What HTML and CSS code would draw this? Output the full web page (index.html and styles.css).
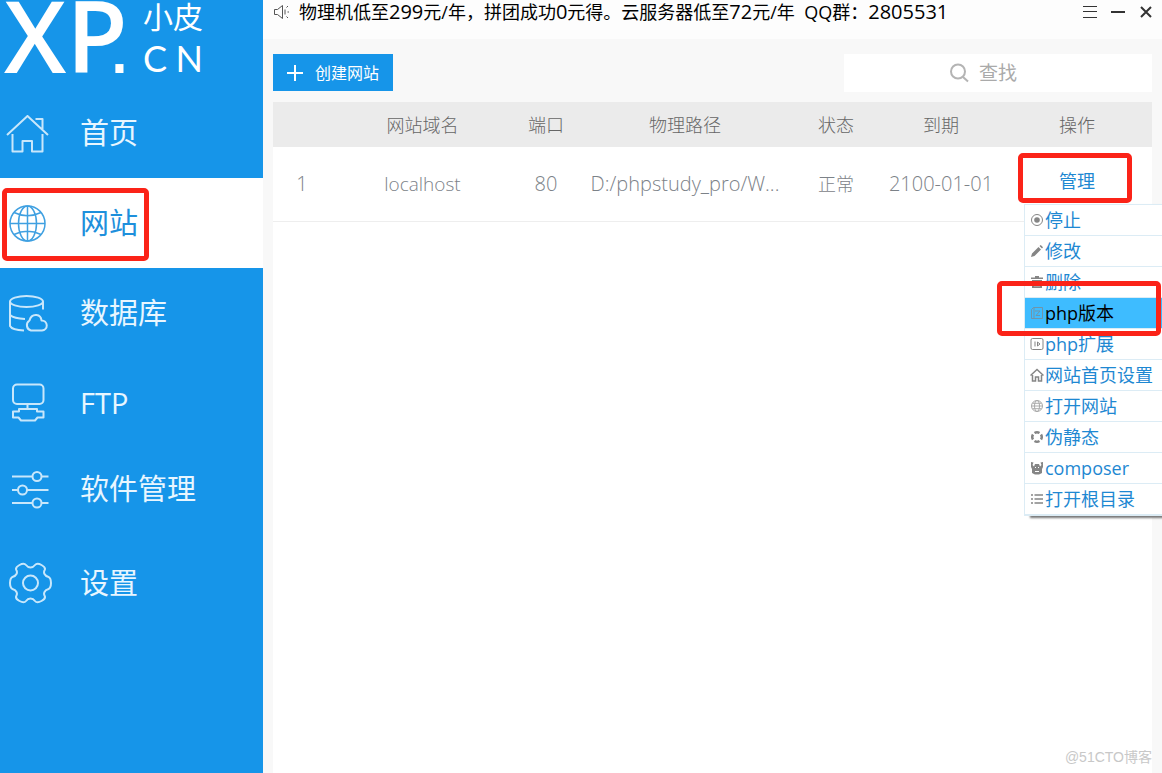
FILE: index.html
```html
<!DOCTYPE html>
<html lang="zh-CN">
<head>
<meta charset="utf-8">
<title>小皮 XP.CN</title>
<link rel="stylesheet" href="styles.css">
</head>
<body>
<div class="app">
  <aside class="sidebar">
    <div class="logo">
      <span class="logo-mark">XP<span class="logo-dot">.</span></span>
      <span class="logo-side">
        <span class="logo-cn">小皮</span>
        <span class="logo-domain"><span>C</span><span>N</span></span>
      </span>
    </div>
    <nav class="nav">
      <a class="nav-item" href="#">
        <svg class="nav-icon" viewBox="0 0 56 48"><path d="M7 26L27.500 7L48 26M12.500 25V42.500H22.500V32H32V42.500H42.500V25M35.500 10H42.500V20"/></svg>
        <span>首页</span>
      </a>
      <a class="nav-item active" href="#">
        <svg class="nav-icon" viewBox="0 0 56 48"><circle cx="27.500" cy="24.500" r="17.500"/><ellipse cx="27.500" cy="24.500" rx="9" ry="17.500"/><path d="M27.500 7V42M10 24.500H45M14 13.500Q27.500 20 41 13.500M14 35.500Q27.500 29 41 35.500"/></svg>
        <span>网站</span>
      </a>
      <a class="nav-item" href="#">
        <svg class="nav-icon" viewBox="0 0 56 48"><ellipse cx="26.500" cy="12.500" rx="16.500" ry="5.500"/><path d="M10 12.500V37Q12 41 24 41.500M43 12.500V20.500M10 26Q14 29.500 25 30M31 41.500A5.500 5.500 0 0 1 29.500 31.500Q31 25.500 36.500 26Q41 26.500 41.500 31.500A5 5 0 0 1 42 41.500Z"/></svg>
        <span>数据库</span>
      </a>
      <a class="nav-item" href="#">
        <svg class="nav-icon" viewBox="0 0 56 48"><rect x="13" y="5.500" width="30.500" height="19.500" rx="4"/><path d="M27.500 25V30M19 30H37V32.500H43.500V38.500H37.500L35 41.500H21L18.500 38.500H13V32.500H19Z"/></svg>
        <span>FTP</span>
      </a>
      <a class="nav-item raised" href="#">
        <svg class="nav-icon" viewBox="0 0 56 48"><path d="M12 11.500H32.500M41.500 11.500H48.500M12 25H18M27 25H48.500M12 38H32.500M41.500 38H48.500"/><circle cx="37" cy="11.500" r="4.500"/><circle cx="22.500" cy="25" r="4.500"/><circle cx="37" cy="38" r="4.500"/></svg>
        <span>软件管理</span>
      </a>
      <a class="nav-item" href="#">
        <svg class="nav-icon" viewBox="-30.500 -24 56 48"><path d="M20.500 0Q20.500 5 17.500 6.300Q15 7 14 9Q13 11 14.200 13Q15.500 15.500 11 18Q6.500 20.500 4.500 18Q2.800 15.600 0 15.600Q-2.800 15.600 -4.500 18Q-6.500 20.500 -11 18Q-15.500 15.500 -14.200 13Q-13 11 -14 9Q-15 7 -17.500 6.300Q-20.500 5 -20.500 0Q-20.500 -5 -17.500 -6.300Q-15 -7 -14 -9Q-13 -11 -14.200 -13Q-15.500 -15.500 -11 -18Q-6.500 -20.500 -4.500 -18Q-2.800 -15.600 0 -15.600Q2.800 -15.600 4.500 -18Q6.500 -20.500 11 -18Q15.500 -15.500 14.200 -13Q13 -11 14 -9Q15 -7 17.500 -6.300Q20.500 -5 20.500 0Z"/><circle r="7.500"/></svg>
        <span>设置</span>
      </a>
    </nav>
  </aside>

  <main class="main">
    <header class="titlebar">
      <svg class="speaker" viewBox="0 0 18 18"><path d="M1.500 6.500V11.500H4.500L9.500 15.500V2.500L4.500 6.500ZM12 6.500V11.500"/><path d="M13.500 4.500L15 3M14.500 9H16M13.500 13.500L15 15"/></svg>
      <p class="notice">物理机低至<span class="num">299</span>元/年，拼团成功<span class="num">0</span>元得。云服务器低至<span class="num">72</span>元/年&nbsp; QQ群：<span class="num">2805531</span></p>
      <div class="window-buttons">
        <button class="win" aria-label="菜单"><svg viewBox="0 0 16 14"><path class="thin" d="M1 1.500H15M1 6.500H15M1 12.500H15"/></svg></button>
        <button class="win" aria-label="最小化"><svg viewBox="0 0 16 14"><path d="M1 7H15"/></svg></button>
        <button class="win" aria-label="关闭"><svg viewBox="0 0 16 14"><path d="M3 2L13 12M13 2L3 12"/></svg></button>
      </div>
    </header>

    <section class="content">
      <div class="toolbar">
        <button class="create"><svg viewBox="0 0 16 16"><path d="M8 0V16M0 8H16"/></svg><span>创建网站</span></button>
        <label class="search">
          <svg viewBox="0 0 22 22"><circle cx="9" cy="9.500" r="7"/><path d="M14 15L19 19.500"/></svg>
          <input type="text" placeholder="查找" aria-label="查找">
        </label>
      </div>

      <div class="panel">
        <table class="sites">
          <colgroup><col class="c-index"><col class="c-domain"><col class="c-port"><col class="c-path"><col class="c-state"><col class="c-expire"><col class="c-action"></colgroup>
          <thead>
            <tr><th></th><th>网站域名</th><th>端口</th><th>物理路径</th><th>状态</th><th>到期</th><th>操作</th></tr>
          </thead>
          <tbody>
            <tr>
              <td class="num">1</td><td class="domain">localhost</td><td class="num">80</td><td class="num">D:/phpstudy_pro/W...</td><td>正常</td><td class="num">2100-01-01</td>
              <td class="action">
                <div class="dropdown">
                  <button class="manage">管理</button>
                  <ul class="menu">
                    <li><button><svg viewBox="0 0 14 14"><circle cx="7" cy="7" r="5.500"/><circle class="solid" cx="7" cy="7" r="2.800"/></svg>停止</button></li>
                    <li><button><svg viewBox="0 0 14 14"><path class="solid" d="M1 13L2 9.500L8.500 3L11 5.500L4.500 12ZM9.500 2L10.800 1L13 3.200L12 4.500Z"/></svg>修改</button></li>
                    <li><button><svg viewBox="0 0 14 14"><path class="solid" d="M1 2.500H5V1H9V2.500H13V4H1ZM2 5H12V13H2Z"/><path class="cut" d="M5 6.500V11.500M7 6.500V11.500M9 6.500V11.500"/></svg>删除</button></li>
                    <li class="selected"><button><svg viewBox="0 0 14 14"><path d="M3.500 1.500H12.500V12.500H1.500V3.500ZM4 1.500V12M5 5H10L6 9.500H10"/></svg>php版本</button></li>
                    <li><button><svg viewBox="0 0 14 14"><rect x="1" y="1.500" width="12" height="11" rx="1.500"/><path d="M5 4.500V9.500M7.500 5V9L10 7Z"/></svg>php扩展</button></li>
                    <li><button><svg class="medium" viewBox="0 0 14 14"><path d="M.5 7.500L7 1.500L13.500 7.500M2.500 7V13H5.500V9H8.500V13H11.500V7"/></svg>网站首页设置</button></li>
                    <li><button><svg class="light" viewBox="0 0 14 14"><circle cx="7" cy="7" r="5.500"/><ellipse cx="7" cy="7" rx="2.500" ry="5.500"/><path d="M1.500 7H12.500M2.500 4.300H11.500M2.500 9.700H11.500"/></svg>打开网站</button></li>
                    <li><button><svg viewBox="0 0 14 14"><path class="bold" d="M4.500 3A4.700 4.700 0 0 1 9.500 3M11 4.500A4.700 4.700 0 0 1 11 9.500M9.500 11A4.700 4.700 0 0 1 4.500 11M3 9.500A4.700 4.700 0 0 1 3 4.500"/></svg>伪静态</button></li>
                    <li><button><svg viewBox="0 0 14 14"><path class="solid" d="M1 1L3.500 1.500L2.500 4L4 5.500L5 3H9L10 5.500L11.500 4L10.500 1.500L13 1V6L12 8V12L9 13.500H5L2 12V8L1 6Z"/><path class="cut" d="M5 6.500H6M8 6.500H9M5 10.500H9"/></svg>composer</button></li>
                    <li><button><svg class="medium" viewBox="0 0 14 14"><path d="M1 3H3M4.500 3H13M1 7H3M4.500 7H13M1 11H3M4.500 11H13"/></svg>打开根目录</button></li>
                  </ul>
                </div>
              </td>
            </tr>
          </tbody>
        </table>
        <p class="watermark">@51CTO博客</p>
      </div>
    </section>
  </main>
</div>
</body>
</html>
```
FILE: styles.css
```css
*, *::before, *::after { box-sizing: border-box; }

body {
  margin: 0;
  background: #f8f8f8;
  color: #000;
  font: 18px/24px "Open Sans", "Noto Sans CJK SC", sans-serif;
}

p, ul { margin: 0; padding: 0; }
ul { list-style: none; }
svg { flex: none; fill: none; stroke: currentColor; }
button { border: 0; padding: 0; background: none; color: inherit; font: inherit; cursor: pointer; }

.app {
  display: grid;
  grid-template-columns: 263px minmax(0, 1fr);
  min-height: 100vh;
  overflow: hidden;
}

/* Sidebar */
.sidebar { background: #1695e9; color: #fff; }

.logo { display: flex; justify-content: space-between; width: 203px; height: 88px; padding-left: 4px; }
.logo-mark { font-size: 100px; line-height: 68px; font-weight: 600; }
.logo-dot { margin-left: -20px; font: 84px/68px "Liberation Sans", sans-serif; }
.logo-side { display: flex; flex-direction: column; width: 60px; }
.logo-cn { font-size: 30px; line-height: 34px; }
.logo-domain { display: flex; justify-content: space-between; font: 36px/48px Lato, sans-serif; }

.nav-item {
  position: relative;
  display: flex;
  align-items: center;
  gap: 24px;
  height: 90px;
  color: #e8f6ff;
  font-size: 29px;
  line-height: 36px;
  text-decoration: none;
}
.nav-icon { width: 56px; height: 48px; stroke-width: 2; stroke-linejoin: round; opacity: .85; }
.raised { padding-bottom: 8px; }
.active { background: #fff; color: #1e90dc; }
.active .nav-icon { stroke-width: 1.5; }

/* Red callout frames */
.active::after, .manage::after, .selected::after {
  content: "";
  position: absolute;
  border: 5px solid #fb2318;
  border-radius: 5px;
  pointer-events: none;
}
.active::after { left: 2px; top: 10px; width: 147px; height: 73px; }

/* Title bar */
.main { display: flex; flex-direction: column; min-width: 0; }
.titlebar {
  display: flex;
  align-items: center;
  height: 39px;
  padding: 0 8px 15px 10px;
  background: #fdfdfd;
}
.speaker { width: 18px; height: 18px; margin-right: 8px; color: #555; }
.notice { flex: 1; white-space: nowrap; }
.num { font-size: 20px; }
.window-buttons { display: flex; gap: 12px; color: #333; }
.win { display: flex; }
.win svg { width: 16px; height: 14px; stroke-width: 2; }
.win .thin { stroke-width: 1; }

/* Toolbar */
.content { display: flex; flex: 1; flex-direction: column; gap: 10px; padding: 15px 10px 0; }
.toolbar { display: flex; justify-content: space-between; align-items: flex-start; }
.create {
  display: flex;
  align-items: center;
  justify-content: center;
  gap: 12px;
  width: 120px;
  height: 37px;
  background: #1695e9;
  color: #fff;
  font-size: 16px;
}
.create svg { width: 16px; height: 16px; stroke-width: 2; }
.search {
  display: flex;
  align-items: center;
  gap: 8px;
  width: 308px;
  height: 38px;
  padding-left: 105px;
  background: #fff;
  color: #b4b4b4;
}
.search svg { width: 22px; height: 22px; stroke-width: 2; }
.search input { flex: 1; min-width: 0; border: 0; padding: 0; outline: 0; background: none; color: #777; font: inherit; font-size: 19px; }
.search input::placeholder { color: #aaa; opacity: 1; }

/* Sites table */
.panel { display: flex; flex: 1; flex-direction: column; justify-content: space-between; background: #fff; }
.sites { width: 100%; border-collapse: collapse; table-layout: fixed; text-align: center; font-weight: 300; }
.c-index { width: 58px; }
.c-port { width: 64px; }
.c-path { width: 214px; }
.c-state { width: 88px; }
.c-expire { width: 122px; }
.c-action { width: 150px; }
.sites th { height: 45px; padding: 0; background: #ebebeb; color: #666; font-weight: 300; }
.sites td { height: 74px; padding: 0; border-bottom: 1px solid #eee; color: #7c8288; white-space: nowrap; }
.sites .domain { font-size: 19px; }
.sites .action { vertical-align: top; color: #1e88d2; }

.dropdown { position: relative; height: 57px; padding-top: 6px; }
.manage { position: relative; width: 118px; height: 56px; font-weight: 400; }
.manage::after { left: 0; top: 0; width: 114px; height: 50px; z-index: 2; }

.menu {
  position: absolute;
  top: 57px;
  left: 22px;
  z-index: 1;
  width: 150px;
  border: 1px solid #dcecf5;
  background: #fff;
  box-shadow: 6px 2px 2px #777;
  text-align: left;
  font-weight: 400;
}
.menu li { position: relative; height: 31px; border-bottom: 1px solid #dcecf5; }
.menu button { display: flex; align-items: center; gap: 1px; width: 100%; height: 30px; padding-left: 5px; }
.menu svg { width: 14px; height: 14px; color: #858585; }
.menu .solid { fill: currentColor; stroke: none; }
.menu .cut { stroke: #fff; }
.menu .medium { stroke-width: 1.5; }
.menu .bold { stroke-width: 2.5; }
.menu .light { color: #aaa; }
.menu .selected { background: #3ebcff; color: #000; }
.selected svg { opacity: .7; }
.selected::after { left: -28px; top: -17px; width: 164px; height: 55px; z-index: 2; }

.watermark { padding-bottom: 4px; color: #c8c8c8; text-align: right; font-size: 14px; font-family: "Liberation Sans", "Noto Sans CJK SC", sans-serif; }
```
